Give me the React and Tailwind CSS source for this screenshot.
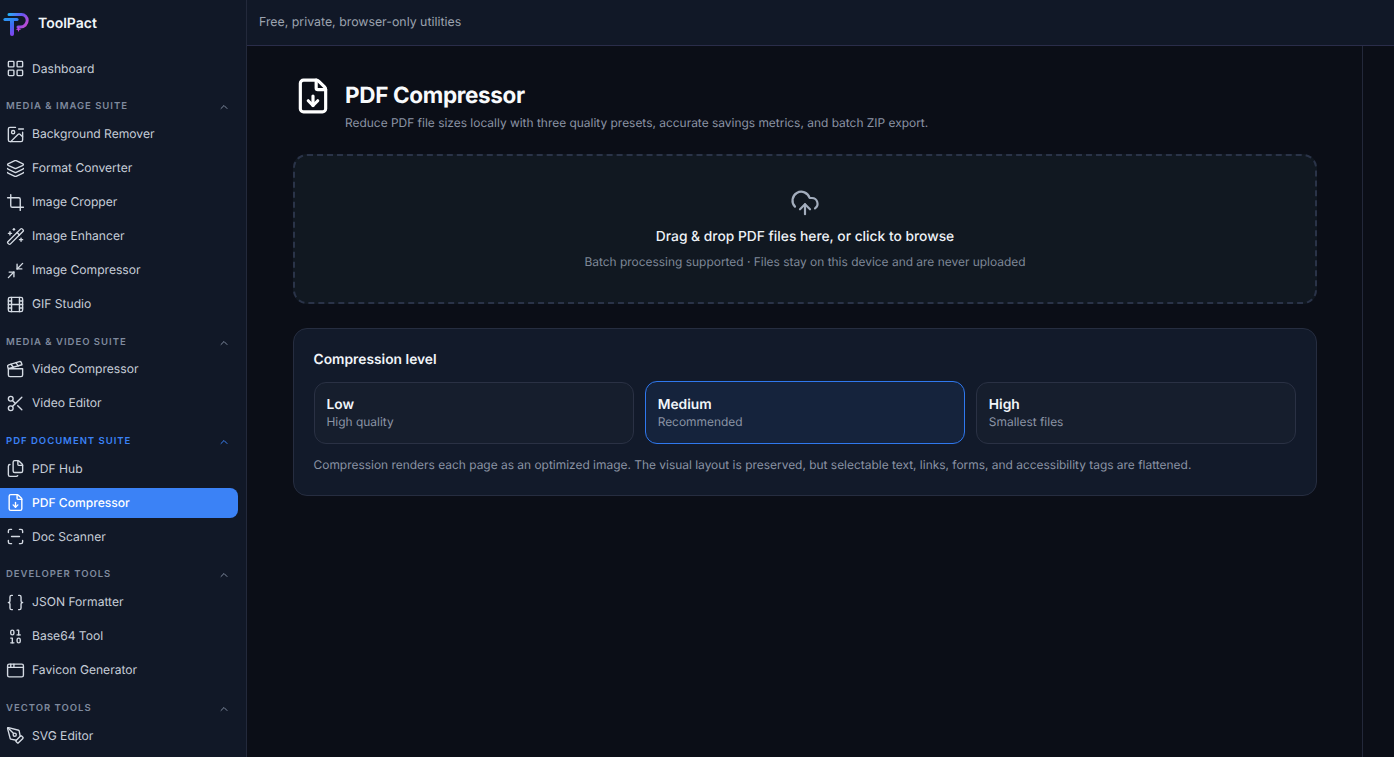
import React from 'react'
import {
  LayoutGrid, ChevronUp, ImageMinus, Layers, Crop, WandSparkles, Minimize2, Film,
  Clapperboard, Scissors, Files, FileDown, ScanLine, Braces, Binary, AppWindow, PenTool, CloudUpload,
} from 'lucide-react'

const sections = [
  {
    title: 'MEDIA & IMAGE SUITE',
    items: [
      ['Background Remover', ImageMinus],
      ['Format Converter', Layers],
      ['Image Cropper', Crop],
      ['Image Enhancer', WandSparkles],
      ['Image Compressor', Minimize2],
      ['GIF Studio', Film],
    ],
  },
  {
    title: 'MEDIA & VIDEO SUITE',
    items: [
      ['Video Compressor', Clapperboard],
      ['Video Editor', Scissors],
    ],
  },
  {
    title: 'PDF DOCUMENT SUITE',
    active: true,
    items: [
      ['PDF Hub', Files],
      ['PDF Compressor', FileDown],
      ['Doc Scanner', ScanLine],
    ],
  },
  {
    title: 'DEVELOPER TOOLS',
    items: [
      ['JSON Formatter', Braces],
      ['Base64 Tool', Binary],
      ['Favicon Generator', AppWindow],
    ],
  },
  {
    title: 'VECTOR TOOLS',
    items: [['SVG Editor', PenTool]],
  },
]

const levels = [
  ['Low', 'High quality'],
  ['Medium', 'Recommended'],
  ['High', 'Smallest files'],
]

function Logo() {
  return (
    <svg width="26" height="26" viewBox="0 0 26 26" fill="none">
      <defs>
        <linearGradient id="tp" x1="4" y1="3" x2="12" y2="26" gradientUnits="userSpaceOnUse">
          <stop offset="0" stopColor="#1fb6f6" />
          <stop offset="0.5" stopColor="#3b6ff0" />
          <stop offset="1" stopColor="#8b3df0" />
        </linearGradient>
        <linearGradient id="tq" x1="5" y1="3" x2="25" y2="18" gradientUnits="userSpaceOnUse">
          <stop offset="0" stopColor="#1fb6f6" />
          <stop offset="0.5" stopColor="#6a55f2" />
          <stop offset="1" stopColor="#d946c8" />
        </linearGradient>
      </defs>
      <path d="M6 4.5h12.5a5.7 5.7 0 0 1 5.7 5.8 6.8 6.8 0 0 1-6.8 6.8h-2.4" stroke="url(#tq)" strokeWidth="3" strokeLinecap="round" />
      <path d="M2 9.5h12" stroke="url(#tp)" strokeWidth="3.2" strokeLinecap="round" />
      <path d="M9 10v14" stroke="url(#tp)" strokeWidth="4" strokeLinecap="round" />
      <path d="M15.5 16.5l.8 2 2 .8-2 .8-.8 2-.8-2-2-.8 2-.8z" fill="#c04ae0" />
    </svg>
  )
}

function NavItem({ label, Icon, active }) {
  return (
    <div className={`flex h-[30px] items-center gap-[7.5px] rounded-r-lg pl-[5.5px] text-[12.1px] ${active ? 'bg-[#3b82f6] font-medium text-white' : 'text-[#c6cdd8]'}`}>
      <Icon size={19} strokeWidth={1.75} className={active ? 'text-white' : 'text-[#d5dbe4]'} />
      <span>{label}</span>
    </div>
  )
}

function Section({ title, active, items }) {
  return (
    <div className="mt-[13px]">
      <div className={`flex h-[20px] items-center justify-between pl-[6px] pr-[8px] pt-[1px] text-[9.5px] font-semibold tracking-[1px] ${active ? 'text-[#3b82f6]' : 'text-[#7f8a9e]'}`}>
        <span>{title}</span>
        <ChevronUp size={12} strokeWidth={2} />
      </div>
      <div className="mt-[2.4px] flex flex-col gap-[4px]">
        {items.map(([label, Icon]) => (
          <NavItem key={label} label={label} Icon={Icon} active={label === 'PDF Compressor'} />
        ))}
      </div>
    </div>
  )
}

function Sidebar() {
  return (
    <aside className="flex h-[757px] w-[247px] shrink-0 flex-col overflow-hidden border-r border-[#23293b] bg-[#111827] pr-[8px]">
      <div className="flex h-[46px] shrink-0 items-center gap-[9px] pl-[3px]">
        <Logo />
        <span className="pt-[1px] text-[14px] font-semibold text-[#f1f5f9]">ToolPact</span>
      </div>
      <div className="mt-[7.75px]">
        <NavItem label="Dashboard" Icon={LayoutGrid} />
      </div>
      {sections.map((s) => (
        <Section key={s.title} {...s} />
      ))}
    </aside>
  )
}

export default function App() {
  return (
    <div className="flex h-[757px] w-full overflow-hidden bg-[#0b0e17] font-['Inter',sans-serif] [text-rendering:geometricPrecision]">
      <Sidebar />
      <div className="flex min-w-0 flex-1 flex-col">
        <header className="flex h-[46px] shrink-0 items-center border-b border-[#2a2d4a] bg-[#111827] pb-[1px] pl-[12px] text-[12.35px] text-[#9ca3af]">
          Free, private, browser-only utilities
        </header>
        <div className="flex min-h-0 flex-1">
          <main className="min-w-0 flex-1 pl-[46px] pr-[45px] pt-[31px]">
            <div className="flex items-start gap-[13px] pl-[1px]">
              <FileDown size={38} strokeWidth={2} className="text-white" />
              <div className="pt-[4px]">
                <h1 className="text-[22.5px] leading-[30px] font-bold tracking-[-0.35px] text-[#f8fafc]">PDF Compressor</h1>
                <p className="mt-[4px] text-[11.95px] leading-[16px] text-[#8b94a5]">
                  Reduce PDF file sizes locally with three quality presets, accurate savings metrics, and batch ZIP export.
                </p>
              </div>
            </div>

            <div className="mt-[23px] flex h-[150px] flex-col items-center rounded-[14px] border-2 border-dashed border-[#2a3348] bg-[#111821] pt-[32px]">
              <CloudUpload size={30} strokeWidth={1.75} className="text-[#a3adbd]" />
              <p className="mt-[9px] text-[13.8px] leading-[20px] font-medium text-[#eef2f7]">Drag &amp; drop PDF files here, or click to browse</p>
              <p className="mt-[7px] text-[11.95px] leading-[16px] text-[#7f8898]">
                Batch processing supported · Files stay on this device and are never uploaded
              </p>
            </div>

            <section className="mt-[24px] h-[168px] rounded-[14px] border border-[#262d40] bg-[#121a2a] pl-[19.5px] pr-[20px] pt-[21px]">
              <h2 className="text-[13.8px] leading-[20px] font-semibold text-[#f1f5f9]">Compression level</h2>
              <div className="mt-[11px] grid h-[62px] grid-cols-3 items-center gap-[11px]">
                {levels.map(([name, sub]) => {
                  const on = name === 'Medium'
                  return (
                    <div key={name} className={`rounded-[12px] px-[12px] ${on ? 'h-[63px] border-[1.5px] border-[#2f78ee] bg-[#15233c] pt-[13.5px]' : 'h-[62px] border border-[#2a3144] bg-[#161e2d] pt-[13px]'}`}>
                      <div className="text-[13.8px] leading-[18px] font-semibold text-[#f1f5f9]">{name}</div>
                      <div className="text-[11.95px] leading-[16px] text-[#8b94a5]">{sub}</div>
                    </div>
                  )
                })}
              </div>
              <p className="mt-[13.5px] text-[11.95px] leading-[16px] text-[#8b94a5]">
                Compression renders each page as an optimized image. The visual layout is preserved, but selectable text, links, forms, and accessibility tags are flattened.
              </p>
            </section>
          </main>
          <div className="w-[32px] shrink-0 border-l border-[#23283a]" />
        </div>
      </div>
    </div>
  )
}
